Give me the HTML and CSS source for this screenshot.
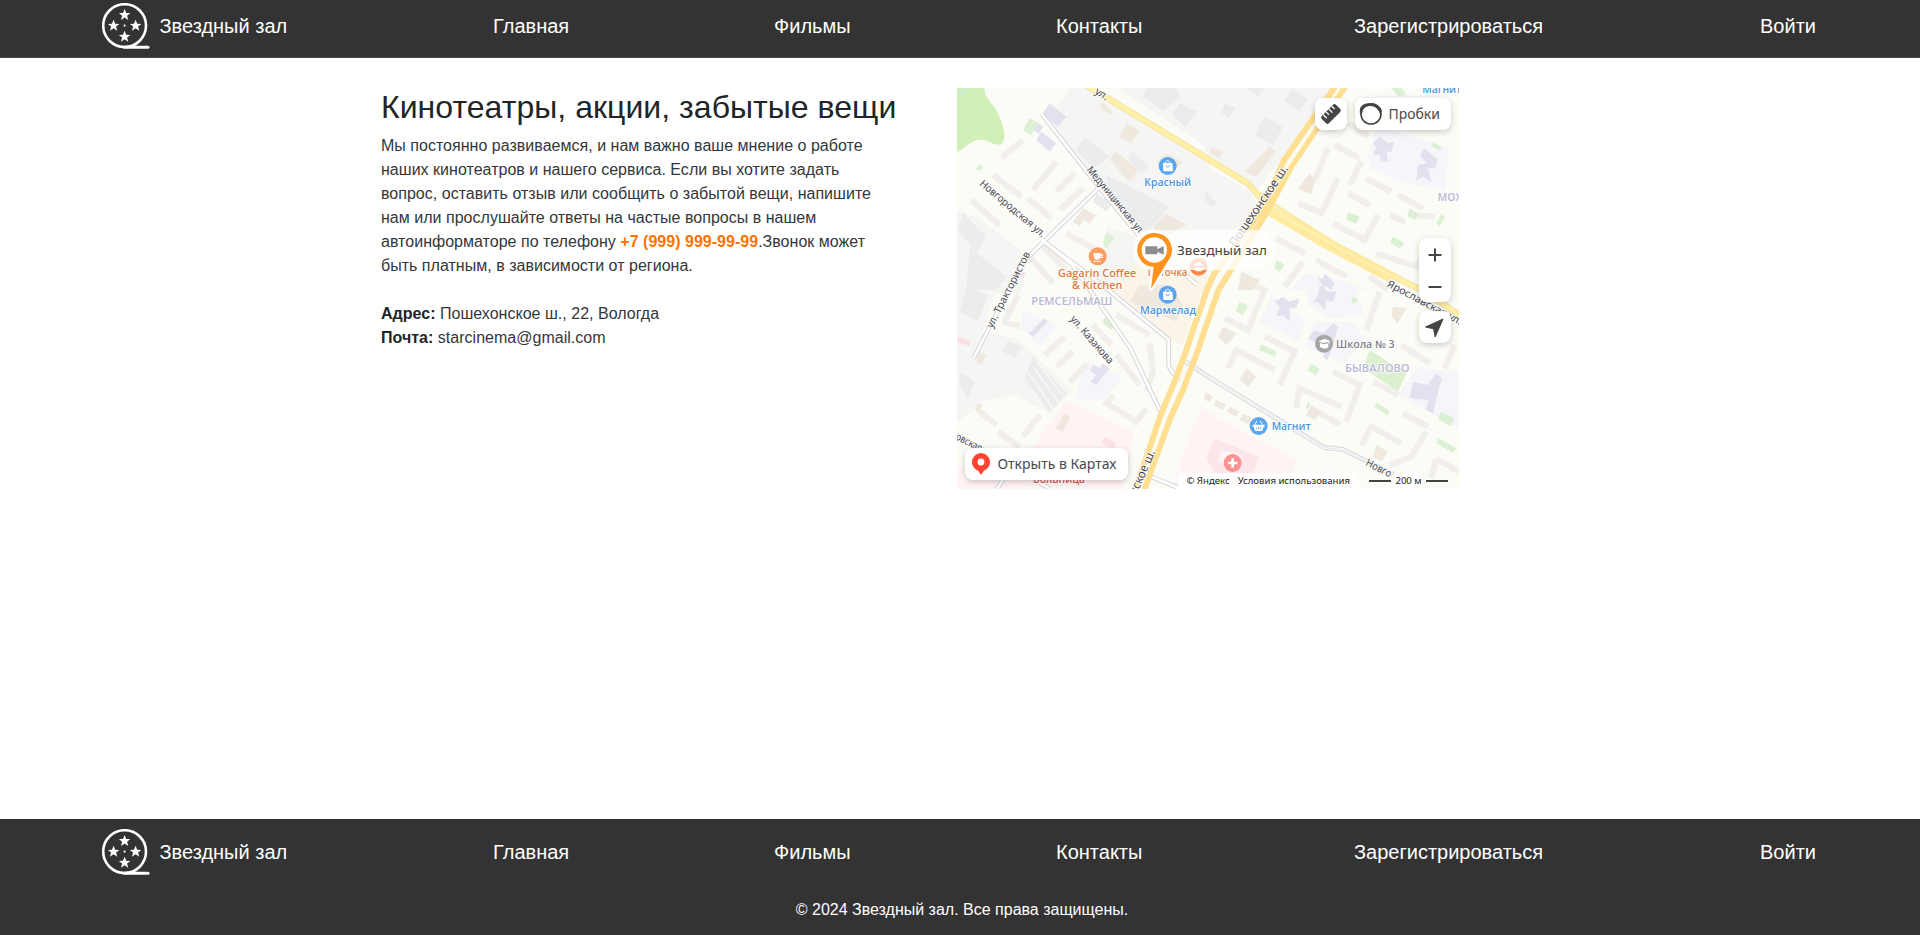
FILE: index.html
```html
<!DOCTYPE html>
<html lang="ru">
<head>
<meta charset="utf-8">
<title>Контакты — Звездный зал</title>
<link rel="stylesheet" href="styles.css">
</head>
<body>
<svg class="defs" aria-hidden="true">
  <defs>
    <path id="star" d="M0-6 1.6-2 5.7-1.9 2.5.8 3.6 4.9 0 2.5-3.6 4.9-2.5.8-5.7-1.9-1.6-2Z"/>
    <symbol id="reel" viewBox="0 0 48 46">
      <circle cx="22.6" cy="22.6" r="21.4" fill="none" stroke="#fff" stroke-width="2.6"/>
      <path d="M22 44.2h24" stroke="#fff" stroke-width="3" stroke-linecap="round"/>
      <circle cx="22.6" cy="22.6" r="1.1" fill="#fff"/>
      <g fill="#fff"><use href="#star" x="22.6" y="12"/><use href="#star" x="11.6" y="22.8"/><use href="#star" x="33.6" y="22.8"/><use href="#star" x="22.6" y="33.8"/></g>
    </symbol>
  </defs>
</svg>
<header class="header">
  <nav class="nav">
    <a class="brand"><svg class="logo"><use href="#reel"/></svg>Звездный зал</a>
    <a class="home">Главная</a><a class="films">Фильмы</a><a class="contacts">Контакты</a><a class="register">Зарегистрироваться</a><a class="login">Войти</a>
  </nav>
</header>
<main class="main">
  <section class="info">
    <h2 class="title">Кинотеатры, акции, забытые вещи</h2>
    <p class="text">Мы постоянно развиваемся, и нам важно ваше мнение о работе<br>наших кинотеатров и нашего сервиса. Если вы хотите задать<br>вопрос, оставить отзыв или сообщить о забытой вещи, напишите<br>нам или прослушайте ответы на частые вопросы в нашем<br>автоинформаторе по телефону <b class="phone">+7 (999) 999-99-99</b>.Звонок может<br>быть платным, в зависимости от региона.</p>
    <p class="text address"><b>Адрес:</b> Пошехонское ш., 22, Вологда<br><b>Почта:</b> starcinema@gmail.com</p>
  </section>
  <section class="map">
    <svg class="canvas" viewBox="0 0 1506 1203">
      <rect width="1506" height="1203" fill="#fbfcf6"/>
      <!-- industrial areas, parks and campuses -->
      <g transform="translate(-22 -24)">
        <path fill="#f5f6f3" d="M360 24H430L780 250V480H590L560 450 400 260 290 105 340 60ZM500 24H780V205Z"/>
        <path fill="#f5f6f3" d="M22 390 90 415 230 525 215 640H22ZM470 440 560 470 560 640H440Z"/>
        <path fill="#d0f0b8" d="M22 24H105C100 50 125 65 140 90C155 120 175 170 158 190C135 205 120 175 85 180C60 185 45 205 22 217Z"/>
        <path d="M22 44C40 42 46 35 47 24" fill="none" stroke="#bfe2fa" stroke-width="4"/>
        <path fill="#faf4e9" d="M520 590 580 520 680 535 780 590V640H500Z"/>
      </g>
      <g transform="translate(743 -24)">
        <path fill="#f5f6f3" d="M0 24H380L320 110 160 330 0 225ZM0 255 130 330 165 380 75 500 0 450Z"/>
        <path fill="#f5f5fa" d="M520 145 610 165 735 205 720 330 605 310 495 265 490 225ZM300 580 400 600 490 630H260Z"/>
      </g>
      <g transform="translate(-22 591)">
        <path fill="#f5f6f3" d="M22 0H140L100 140 200 160 370 320 300 380 190 330 100 350 22 410Z"/>
        <path fill="#f5f5fa" d="M220 75 320 120 270 185 215 130ZM410 230 520 275 460 345 375 345Z"/>
        <path fill="#fff3f4" d="M350 345 555 440 520 611H22V550L240 500Z"/>
        <path fill="#faf4e9" d="M500 0H765L700 180 655 160 515 50Z"/>
      </g>
      <g transform="translate(743 591)">
        <path fill="#f5f5fa" d="M200 30 300 105 280 170 165 110ZM310 0 450 15 480 90 380 100 310 60ZM330 110 440 110 480 160 420 235 300 185ZM635 250 762 260V430L580 330Z"/>
        <path fill="#fff3f4" d="M0 375 275 525 250 611H-95L-60 490-10 365Z"/>
        <path fill="#dcf0d0" d="M495 195 605 265 580 320 475 250Z"/>
      </g>
      <!-- building footprints -->
      <g fill="none" stroke="#f2eeea" stroke-width="18">
        <path transform="translate(-22 -24)" d="M155 233 220 180M130 285 215 350M250 330 320 245M320 335 375 280M235 355 305 415M330 390 400 325M65 360 150 435M285 505 345 550M240 530 310 610M490 220 555 300M350 460 450 515M365 585 270 490"/>
        <path transform="translate(743 -24)" d="M390 195 465 235M370 205 330 300 300 330M400 295 350 400 280 370M470 245 435 315M485 295 560 335M430 340 495 375M520 405 480 480 385 430M580 345 655 385M690 410 630 405M600 425 555 405M670 500 635 560 515 520M215 475 300 520M295 545 240 620M335 540 425 590M430 130 490 170M495 590 550 630"/>
        <path transform="translate(-22 591)" d="M285 210 345 155M320 245 370 200M360 290 410 240M500 90 600 150M430 120 485 180M500 210 570 300M600 175 610 260 590 320M490 330 470 355 560 410 590 370M85 375 140 420M145 440 210 485M220 455 270 390M160 110 210 125M165 110 205 30"/>
        <path transform="translate(743 591)" d="M150 0 180 15 130 135 60 100M525 20 485 135M180 155 270 200 225 300M70 250 95 195 210 255M385 260 465 300 425 410M275 370 285 310 410 365M505 290 580 330M470 480 500 425 590 475M665 440 620 515 555 540M595 385 670 425M590 180 675 235M750 180 720 250M340 380 405 420M695 520 762 560M695 520 680 580"/>
      </g>
      <g fill="#ececec">
        <path transform="translate(-22 -24)" d="M405 170 480 230 430 265 380 210ZM590 24 680 24 690 50 640 95 580 50ZM690 70 745 95 705 140 665 105ZM470 285 660 380 590 460 480 370ZM550 215 600 260 575 280 535 235ZM440 340 490 370 470 395 430 365ZM40 400 110 470 80 520 25 450ZM60 500 170 590 140 630H50Z"/>
        <path transform="translate(743 -24)" d="M180 110 235 140 205 195 150 165ZM265 24 310 60 285 95 235 60ZM125 24H180L160 50ZM60 70 95 85 70 115 50 100ZM0 330 35 365 25 385 0 360Z"/>
        <path transform="translate(-22 591)" d="M50 5 115 30 85 110 30 80ZM175 165 215 185 195 220 160 200ZM30 260 75 290 55 345 30 300ZM250 215 350 325 300 385 220 290Z"/>
      </g>
      <path transform="translate(-22 591)" d="M235 260 310 370M220 280 290 375M250 245 325 350M260 228 340 332" stroke="#fafaf7" stroke-width="4"/>
      <g fill="#eee8df">
        <path transform="translate(-22 -24)" d="M530 130 570 150 545 190 510 170ZM500 215 565 270 540 305 480 240ZM400 385 440 405 420 430 400 420 390 440 370 425ZM455 65 490 95 480 105 450 80ZM650 220 700 245 670 275 620 245ZM650 400 710 435 630 480 610 440Z"/>
        <path transform="translate(743 -24)" d="M195 200 215 215 155 290 120 275ZM315 280 330 300 320 345 280 325ZM20 200 55 215 45 235 15 220ZM110 575 165 600 145 630H100Z"/>
        <path transform="translate(-22 591)" d="M570 0H660L700 60 680 110 620 85 540 50ZM345 385 362 395 340 440 318 430ZM85 200 110 210 95 240 80 230ZM85 355 98 360 88 380 75 372Z"/>
        <path transform="translate(743 591)" d="M55 125 95 145 65 180 40 155ZM125 250 155 275 130 305 105 285ZM35 345 65 360 52 375 28 360ZM75 365 105 380 95 395 65 380ZM115 385 145 400 130 418 105 405ZM320 360 350 380 330 405 305 390ZM515 480 550 500 530 530 505 515ZM565 65 605 70 580 115 560 95ZM0 320 25 335 15 350 0 345Z"/>
      </g>
      <g fill="#e3e1ee">
        <path transform="translate(-22 -24)" d="M300 70 350 110 325 140 280 100ZM275 155 320 190 300 215 260 180ZM262 125 280 140 268 162 248 148Z"/>
        <path transform="translate(743 -24)" d="M525 170 550 190 570 185 560 215 545 215 550 245 530 245 525 225 505 225 515 200 505 190ZM660 205 700 240 690 265 670 265 680 305 655 290 635 300 640 255 665 250 645 225ZM340 590 370 610 355 625ZM360 580 390 610 380 630 350 610Z"/>
        <path transform="translate(-22 591)" d="M285 100 295 110 250 155 238 145ZM430 240 450 250 460 235 480 250 462 270 440 300 422 290 440 270 422 258Z"/>
        <path transform="translate(743 591)" d="M235 35 255 50 285 40 275 70 255 70 255 110 235 90 215 95 225 65 210 50ZM345 0 370 20 395 20 385 50 365 45 360 75 340 50 325 55 340 30ZM330 135 355 145 385 115 400 125 390 160 370 225 355 215 365 185 310 160ZM695 265 712 280 700 320 685 385 665 375 670 345 615 340 625 290 670 300Z"/>
      </g>
      <g fill="#dcf0d5">
        <path transform="translate(-22 -24)" d="M240 115 265 130 245 165 220 150ZM470 455 495 475 470 505 460 490ZM90 252 102 260 88 272 78 268Z"/>
        <path transform="translate(743 -24)" d="M560 24H590L605 45 580 48ZM685 185 710 200 705 212 680 200ZM430 395 465 410 455 432 425 418ZM615 385 645 405 630 420 608 408ZM565 470 600 490 585 505 557 490ZM710 400 720 410 705 440 695 430ZM215 540 240 555 225 575 210 565Z"/>
        <path transform="translate(-22 591)" d="M470 92 498 115 485 135 457 112Z"/>
        <path transform="translate(743 591)" d="M105 50 130 62 115 90 92 78ZM170 178 215 200 210 215 163 195ZM320 236 345 252 335 272 308 255ZM515 352 555 378 548 390 510 366ZM710 380 750 400 738 425 700 402ZM700 460 755 490 745 503 695 475ZM445 35 460 42 450 58 440 50ZM310 350 318 355 308 375 302 370Z"/>
      </g>
      <g fill="#fde0e6">
        <path transform="translate(-22 591)" d="M465 455 500 475 490 490 455 475ZM25 155 62 168 60 183 22 173Z"/>
        <path transform="translate(743 591)" fill="#fde6ea" fill-rule="evenodd" d="M30 460 162 515 140 580H40L5 520ZM50 495 110 510 110 550 40 530Z"/>
        <path transform="translate(-22 -24)" d="M205 570 230 580 220 595 195 585Z"/>
      </g>
      <!-- minor streets, cased in grey -->
      <g fill="none" stroke-linejoin="round">
        <g stroke="#d6d6d9" stroke-width="14">
          <path d="M254 78 428 300 568 470 640 520 720 590M425 300 200 520 50 810M255 456 345 530 520 780 612 975"/>
          <path d="M255 456 430 586 635 755V835L665 880M685 820 760 870 1100 1078 1160 1085 1310 1160M0 1040 120 1110 280 1203M580 1165 665 1200M120 1203 145 1165"/>
        </g>
        <g stroke="#fff" stroke-width="8">
          <path d="M254 78 428 300 568 470 640 520 720 590M425 300 200 520 50 810M255 456 345 530 520 780 612 975"/>
          <path d="M255 456 430 586 635 755V835L665 880M685 820 760 870 1100 1078 1160 1085 1310 1160M0 1040 120 1110 280 1203M580 1165 665 1200M120 1203 145 1165"/>
        </g>
        <path d="M685 820 760 870 1100 1078 1160 1085 1310 1160" stroke="#d8d8da" stroke-width="2"/>
        <!-- main roads -->
        <path d="M385-10 743 207 875 288 935 360 1120 465 1320 570 1400 610 1520 690" stroke="#f5df9e" stroke-width="19"/>
        <path d="M385-10 743 207 875 288 935 360 1120 465 1320 570 1400 610 1520 690" stroke="#fff0a8" stroke-width="14"/>
        <path d="M868 285 965 358 1130 463 1330 568" stroke="#fdeaa0" stroke-width="9"/>
        <path d="M938 378 1118 482 1300 577" stroke="#ffeaa0" stroke-width="14"/>
        <path d="M1135-5 980 218 920 360 770 560 752 600 708 726 688 786 653 880 613 976 535 1205" stroke="#ffdf91" stroke-width="18"/>
        <path d="M1165-5 1003 235 930 372 810 565 785 605 743 726 723 786 678 906 640 990 562 1205" stroke="#ffdf91" stroke-width="18"/>
        <path d="M1150 0 990 240" stroke="#fffbea" stroke-width="4"/>
      </g>
      <!-- labels -->
      <g class="street">
        <text transform="translate(412 15) rotate(33)">ул.</text>
        <text transform="translate(388 246) rotate(50.5)" textLength="246" lengthAdjust="spacingAndGlyphs">Медуницинская ул</text>
        <text transform="translate(66 290) rotate(40)" textLength="247" lengthAdjust="spacingAndGlyphs">Новгородская ул.</text>
        <text transform="translate(106 722) rotate(-63)" textLength="252" lengthAdjust="spacingAndGlyphs">ул. Трактористов</text>
        <text transform="translate(338 694) rotate(49)" textLength="180" lengthAdjust="spacingAndGlyphs">ул. Казакова</text>
        <text transform="translate(835 478) rotate(-56)" textLength="285" lengthAdjust="spacingAndGlyphs" class="major">Пошехонское ш.</text>
        <text transform="translate(538 1225) rotate(-67)" textLength="145" lengthAdjust="spacingAndGlyphs" class="major">нское ш.</text>
        <text transform="translate(1288 594) rotate(28)" textLength="250" lengthAdjust="spacingAndGlyphs">Ярославская ул.</text>
        <text transform="translate(1224 1131) rotate(27)" textLength="82" lengthAdjust="spacingAndGlyphs">Новго</text>
        <text transform="translate(-6 1053) rotate(27)" textLength="85" lengthAdjust="spacingAndGlyphs">овская</text>
      </g>
      <g class="district">
        <text x="223" y="650" textLength="243" lengthAdjust="spacingAndGlyphs">РЕМСЕЛЬМАШ</text>
        <text x="1164" y="852" textLength="194" lengthAdjust="spacingAndGlyphs">БЫВАЛОВО</text>
        <text x="1442" y="339">МОЖ</text>
      </g>
      <g class="place blue">
        <text x="562" y="294" textLength="140" lengthAdjust="spacingAndGlyphs">Красный</text>
        <text x="549" y="679" textLength="168" lengthAdjust="spacingAndGlyphs">Мармелад</text>
        <text x="944" y="1026" textLength="117" lengthAdjust="spacingAndGlyphs">Магнит</text>
        <text x="1396" y="14" textLength="117" lengthAdjust="spacingAndGlyphs">Магнит</text>
      </g>
      <g class="place orange">
        <text x="303" y="567" textLength="235" lengthAdjust="spacingAndGlyphs">Gagarin Coffee</text>
        <text x="345" y="604" textLength="151" lengthAdjust="spacingAndGlyphs">&amp; Kitchen</text>
        <text x="572" y="565" textLength="119" lengthAdjust="spacingAndGlyphs">Пяточка</text>
      </g>
      <text class="place grey" x="1137" y="779" textLength="176" lengthAdjust="spacingAndGlyphs">Школа № 3</text>
      <text class="place red" x="229" y="1184" textLength="155" lengthAdjust="spacingAndGlyphs">Больница</text>
      <!-- points of interest -->
      <g id="bag" transform="translate(632 234)"><circle r="27" fill="#5aa5f0"/><path d="M-14-9H14L16 16H-13Z" fill="#fff"/><path d="M-7-7V-11Q0-22 7-11V-7" fill="none" stroke="#fff" stroke-width="3"/><path d="M-6-2Q0 8 6-2" fill="none" stroke="#5aa5f0" stroke-width="3"/></g>
      <use href="#bag" y="386"/>
      <g transform="translate(905 1014)"><circle r="27" fill="#5aa5f0"/><path d="M-18-4H18V2H15L11 15H-11L-15 2H-18Z" fill="#fff"/><path d="M-11-4-5-15M11-4 5-15" stroke="#fff" stroke-width="3"/><path d="M-6 3V11M0 3V11M6 3V11" stroke="#5aa5f0" stroke-width="2"/></g>
      <g transform="translate(422 505)"><circle r="27" fill="#ff9d60"/><path d="M-13-10H9V-6H16V5H8Q5 10-2 10-13 9-13-10ZM-13 13H10V16H-13Z" fill="#fff"/><path d="M9-2H13V2H9Z" fill="#ff9d60"/></g>
      <g transform="translate(725 536)"><circle r="27" fill="#ff8748"/><path d="M-15-3Q0-24 15-3ZM-15 3H15Q13 14 0 14-13 14-15 3Z" fill="#fff"/></g>
      <g transform="translate(1101 767)"><circle r="27" fill="#a6a6a9"/><path d="M-17-7 2-15 17-9V0H14V-6L-1-2ZM-12-2 0 2 13-1V12L1 15-12 10Z" fill="#fff"/></g>
      <g transform="translate(827 1125)"><circle r="27" fill="#fa9292"/><path d="M-4-14H4V-4H14V4H4V14H-4V4H-14V-4H-4Z" fill="#fff"/></g>
      <!-- cinema placemark -->
      <rect x="530" y="426" width="420" height="120" rx="52" fill="#fff" opacity=".76"/>
      <path d="M593 429A57 57 0 0 0 548 520Q564 540 583 542L574 600Q582 618 593 600L633 529A57 57 0 0 0 593 429Z" fill="#fff"/>
      <path d="M593 435A51 51 0 1 0 590 537L582 602 633 519A51 51 0 0 0 593 435Z" fill="#ff931e"/>
      <circle cx="592" cy="486" r="38" fill="#fff"/>
      <path d="M565 475H601V484L620 474V500L601 491V499H565Z" fill="#8d8d8d"/>
      <text class="pinlabel" x="660" y="500" textLength="270" lengthAdjust="spacingAndGlyphs">Звездный зал</text>
    </svg>
    <div class="control ruler"><svg viewBox="0 0 32 32"><g transform="translate(16 16) rotate(-45)"><rect x="-10" y="-5" width="20" height="10" rx="2" fill="#444"/><path d="M-6-5V0M-2-5V-1M2-5V0M6-5V-1" stroke="#fff" stroke-width="1.3"/></g></svg></div>
    <div class="control traffic"><svg class="trafficicon" viewBox="0 0 24 24"><circle cx="12" cy="12" r="10" fill="#fff" stroke="#444" stroke-width="1.6"/><path d="M1 12Q-1 1 12 1 20 1 23 9L21 12Q18 3 10 4 3 5 3 12Z" fill="#444"/></svg>Пробки</div>
    <div class="control zoom"><svg viewBox="0 0 32 64"><path d="M9.500 17H22.500M16 10.500V23.500M9.500 49H22.500" stroke="#444" stroke-width="2"/></svg></div>
    <div class="control locate"><svg viewBox="0 0 32 32"><path d="M24 8 16.2 26 14.5 17.8 6.5 16Z" fill="#444" stroke="#444" stroke-linejoin="round"/></svg></div>
    <div class="control open"><svg class="openicon" viewBox="0 0 18 24"><path d="M9 1A9 9 0 0 1 18 10C18 14 15.5 17.3 12 18.5L9 23 6 18.5C2.5 17.3 0 14 0 10A9 9 0 0 1 9 1Z" fill="#ff4433"/><circle cx="9" cy="10" r="3.4" fill="#fff"/></svg>Открыть в Картах</div>
    <div class="legal"><span>© Яндекс</span><span>Условия использования</span></div>
    <div class="scale"><i></i><span>200 м</span><i></i></div>
  </section>
</main>
<footer class="footer">
  <nav class="nav">
    <a class="brand"><svg class="logo"><use href="#reel"/></svg>Звездный зал</a>
    <a class="home">Главная</a><a class="films">Фильмы</a><a class="contacts">Контакты</a><a class="register">Зарегистрироваться</a><a class="login">Войти</a>
  </nav>
  <p class="copyright">© 2024 Звездный зал. Все права защищены.</p>
</footer>
</body>
</html>
```
FILE: styles.css
```css
* { box-sizing: border-box; }
body { margin: 0; min-height: 935px; display: flex; flex-direction: column; background: #fff; color: #212529; font: 16px/24px "Liberation Sans", Arial, sans-serif; }
.defs { position: absolute; width: 0; height: 0; }
.header { height: 58px; padding-top: 2px; background: #333; border-bottom: 1px solid #4b474b; }
.nav { display: grid; grid-template-columns: 391px 281px 282px 298px 406px 1fr; padding-left: 102px; height: 48px; align-items: center; color: #fff; font-size: 20px; line-height: 30px; }
.nav a { white-space: nowrap; }
.brand { display: flex; align-items: center; gap: 9.5px; }
.logo { width: 48px; height: 46px; flex: none; }
.main { flex: 1; display: flex; padding: 30px 0 0 381px; }
.info { width: 576.4px; }
.title { margin: 0 0 8px; font-size: 32px; line-height: 38.4px; font-weight: 400; letter-spacing: .04px; white-space: nowrap; }
.text { margin: 0; white-space: nowrap; color: #33373b; letter-spacing: .02px; }
.text b { color: #212529; }
.text .phone { color: #ff7300; }
.address { margin-top: 24px; }
.map { position: relative; width: 502px; height: 401px; overflow: hidden; font-family: "Noto Sans", sans-serif; color: #4a4a4a; }
.canvas { display: block; width: 502px; height: 401px; }
.canvas text { font-family: "Noto Sans", sans-serif; paint-order: stroke; stroke: #fff; stroke-width: 5px; stroke-linejoin: round; }
.street { fill: #45464c; font-size: 31px; }
.street .major { font-size: 36px; }
.canvas .district text { font-family: "Open Sans", sans-serif; }
.district { fill: #b9b6d2; font-size: 31px; font-weight: 600; }
.canvas .place, .canvas .place text { font-family: "Open Sans", sans-serif; }
.place { font-size: 30px; font-weight: 600; }
.blue { fill: #4a95e0; }
.orange { fill: #dc7a3c; }
.grey { fill: #808086; }
.red { fill: #e05252; }
.canvas .pinlabel { fill: #444; font-size: 40px; stroke: none; }
.control { position: absolute; display: flex; align-items: center; background: #fff; border-radius: 8px; box-shadow: 0 2px 6px rgba(0,0,0,.2); font-size: 14px; line-height: 32px; }
.control > svg { display: block; flex: none; }
.ruler { left: 358px; top: 10px; width: 32px; height: 32px; }
.traffic { left: 398px; top: 10px; width: 96px; height: 32px; padding-left: 4px; gap: 5px; font-size: 14px; white-space: nowrap; }
.trafficicon { width: 24px; height: 24px; }
.zoom { left: 462px; top: 150px; width: 32px; height: 64px; }
.locate { left: 462px; top: 223px; width: 32px; height: 32px; }
.open { left: 8px; top: 360px; width: 163px; height: 32px; padding-left: 7px; gap: 7px; white-space: nowrap; }
.openicon { width: 18px; height: 24px; }
.legal, .scale { position: absolute; bottom: 0; height: 16px; display: flex; align-items: center; background: rgba(255,255,255,.9); color: #222; font-size: 9.6px; line-height: 16px; white-space: nowrap; }
.legal { left: 221px; width: 181px; padding-left: 8px; gap: 8px; border-radius: 4px 4px 0 0; }
.scale { left: 412px; gap: 4px; background: none; }
.scale span { background: #fff; }
.scale i { width: 22px; height: 2px; background: #444; }
.footer { height: 116px; padding-top: 9px; background: #333; color: #fff; }
.copyright { margin: 22px 0 0; padding-left: 4px; text-align: center; }
```
